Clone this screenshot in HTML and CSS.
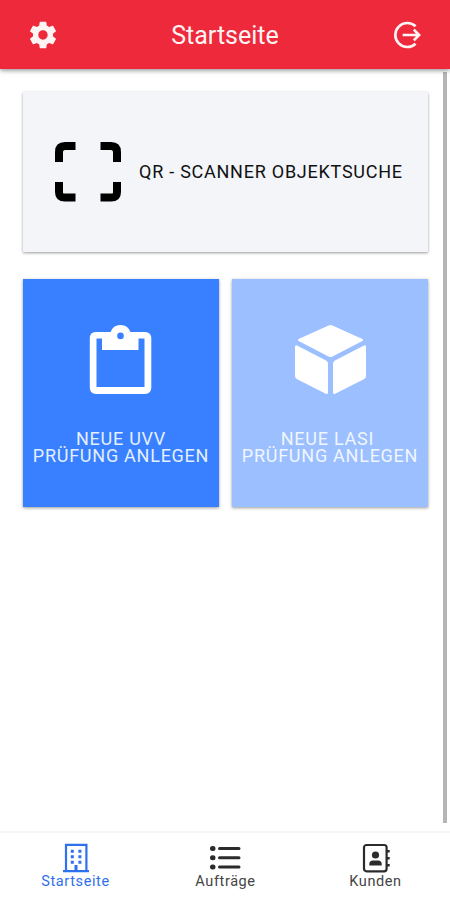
FILE: index.html
```
<!DOCTYPE html>
<html lang="de">
  <head>
    <title>Startseite</title>
    <meta charset="utf-8">
    <meta name="viewport" content="width=device-width, initial-scale=1">
    <link rel="stylesheet" href="styles.css">
  </head>
  <body>

  <header class="toolbar">
    <svg class="toolbar-icon" viewBox="0 0 24 24" fill="currentColor">
      <path d="M19.43 12.98c.04-.32.07-.64.07-.98s-.03-.66-.07-.98l2.11-1.65c.19-.15.24-.42.12-.64l-2-3.46c-.12-.22-.39-.3-.61-.22l-2.49 1c-.52-.4-1.08-.73-1.69-.98l-.38-2.65C14.46 2.18 14.25 2 14 2h-4c-.25 0-.46.18-.49.42l-.38 2.65c-.61.25-1.17.59-1.69.98l-2.49-1c-.23-.09-.49 0-.61.22l-2 3.46c-.13.22-.07.49.12.64l2.11 1.65c-.04.32-.07.65-.07.98s.03.66.07.98l-2.11 1.65c-.19.15-.24.42-.12.64l2 3.46c.12.22.39.3.61.22l2.49-1c.52.4 1.08.73 1.69.98l.38 2.65c.03.24.24.42.49.42h4c.25 0 .46-.18.49-.42l.38-2.65c.61-.25 1.17-.59 1.69-.98l2.49 1c.23.09.49 0 .61-.22l2-3.46c.12-.22.07-.49-.12-.64l-2.11-1.65zM12 15.5c-1.93 0-3.5-1.57-3.5-3.5s1.57-3.5 3.5-3.5 3.5 1.57 3.5 3.5-1.57 3.5-3.5 3.5z"/>
    </svg>
    <h1 class="toolbar-title">Startseite</h1>
    <svg class="toolbar-icon" viewBox="0 0 32 32" fill="none" stroke="currentColor" stroke-width="2.7">
      <path d="M24.6 7.3A12 12 0 1 0 24.6 24.7"/>
      <path d="M11.7 16H28M22.8 10.6L28.1 16L22.8 21.4"/>
    </svg>
  </header>

  <main class="content">
    <div class="page">
      <button class="card scanner">
        <svg class="scan-icon" viewBox="0 0 66 60" fill="none" stroke="#000" stroke-width="8">
          <path d="M4 20V10Q4 4 10 4H20.5"/>
          <path d="M45.5 4H56Q62 4 62 10V20"/>
          <path d="M62 40V50Q62 55.5 56 55.5H45.5"/>
          <path d="M20.5 55.5H10Q4 55.5 4 50V40"/>
        </svg>
        <span class="scanner-label">QR - SCANNER OBJEKTSUCHE</span>
      </button>

      <div class="tiles">
        <button class="card tile">
          <svg class="tile-icon" viewBox="0 0 71 70" fill="#fff">
            <path fill-rule="evenodd" d="M9.5 7H24.6A10.5 10.5 0 0 1 44.4 7H59Q65.3 7 65.3 13.5V62.5Q65.3 69 59 69H10Q3.8 69 3.8 62.5V13.5Q3.8 7 9.5 7ZM10.5 13.5V62H58.5V13.5H52.5V25H16V13.5ZM34.5 7.6A3.3 3.3 0 1 0 34.5 14.2A3.3 3.3 0 1 0 34.5 7.6Z"/>
          </svg>
          <span class="tile-label">NEUE UVV<br>PRÜFUNG ANLEGEN</span>
        </button>
        <button class="card tile disabled">
          <svg class="tile-icon" viewBox="0 0 71 70" fill="#fff">
            <path d="M33 .8Q35.5-.6 38 .8L67.4 14.1Q68.8 15 67.4 15.9L37.5 31.4Q35.5 32.5 33.5 31.4L3.6 15.9Q2.2 15 3.6 14.1Z"/>
            <path d="M0 21.8Q0 19.6 2 20.6L31 35.5Q33 36.5 33 38.5V67.3Q33 69.8 30.8 68.7L2.2 54.3Q0 53.2 0 51Z"/>
            <path d="M71 21.8Q71 19.6 69 20.6L40 35.5Q38 36.5 38 38.5V67.3Q38 69.8 40.2 68.7L68.8 54.3Q71 53.2 71 51Z"/>
          </svg>
          <span class="tile-label">NEUE LASI&nbsp;<br>PRÜFUNG ANLEGEN</span>
        </button>
      </div>
    </div>
    <div class="scrollbar"></div>
  </main>

  <nav class="tabs">
    <a class="tab active">
      <svg class="tab-icon" viewBox="0 0 32 30" fill="none" stroke="currentColor" stroke-width="2.2">
        <path d="M7 28V1.8H27.4V28M4 28.2H30"/>
        <path d="M17 22V28" stroke-width="3"/>
        <path d="M11.8 8.2H14.8M19.4 8.2H22.4M11.8 13.7H14.8M19.4 13.7H22.4M11.8 19.2H14.8M19.4 19.2H22.4" stroke-width="3"/>
      </svg>
      <span class="tab-label">Startseite</span>
    </a>
    <a class="tab">
      <svg class="tab-icon" viewBox="0 0 32 30" fill="none" stroke="currentColor">
        <path d="M3.5 5.5H4M3.5 14.8H4M3.5 24H4" stroke-width="5" stroke-linecap="round"/>
        <path d="M10.5 5.5H30M10.5 14.8H30M10.5 24H30" stroke-width="3" stroke-linecap="round"/>
      </svg>
      <span class="tab-label">Aufträge</span>
    </a>
    <a class="tab">
      <svg class="tab-icon" viewBox="0 0 32 30" fill="none" stroke="currentColor" stroke-width="2.2">
        <rect x="5" y="2" width="22.6" height="26.3" rx="2.5"/>
        <path d="M29.3 7V9.6M29.3 14V16.6M29.3 21V23.6" stroke-width="2.8"/>
        <circle cx="16.5" cy="12" r="3.6" fill="currentColor" stroke="none"/>
        <path d="M10.3 22.5V21Q10.3 17.5 14 17.5H19Q22.7 17.5 22.7 21V22.5Z" fill="currentColor" stroke="none"/>
      </svg>
      <span class="tab-label">Kunden</span>
    </a>
  </nav>

  </body>
</html>
```
FILE: styles.css
```
* {
  box-sizing: border-box;
}
body {
  margin: 0;
  height: 100vh;
  display: flex;
  flex-direction: column;
  overflow: hidden;
  background: #fff;
  font-family: Roboto, sans-serif;
}
button {
  font-family: inherit;
  border: 0;
}

.toolbar {
  height: 69px;
  flex: none;
  display: flex;
  align-items: center;
  justify-content: space-between;
  padding: 0 27px;
  background: #ee293b;
  color: #fff4f4;
  box-shadow: 0 1px 5px rgba(0,0,0,0.5);
  z-index: 1;
}
.toolbar-icon {
  width: 32px;
  height: 32px;
}
.toolbar-title {
  margin: 0;
  padding-top: 2px;
  font-size: 25px;
  font-weight: 400;
}

.content {
  flex: 1;
  display: flex;
  min-height: 0;
}
.page {
  flex: 1;
  padding: 23px 15px 0 23px;
}
.scrollbar {
  width: 4px;
  margin: 3px 3px 8px 0;
  background: #b5b5b5;
}

.card {
  box-shadow: 0 1px 3px rgba(0,0,0,0.4);
}
.scanner {
  width: 405px;
  height: 160px;
  display: flex;
  align-items: center;
  padding: 0 0 0 32px;
  gap: 18px;
  border-radius: 1px;
  background: #f3f5f9;
  color: #111;
}
.scan-icon {
  width: 66px;
  height: 60px;
}
.scanner-label {
  padding-bottom: 2px;
  font-size: 18px;
  letter-spacing: 0.75px;
  white-space: nowrap;
}

.tiles {
  display: flex;
  gap: 13px;
  margin-top: 27px;
}
.tile {
  width: 196px;
  height: 228px;
  display: flex;
  flex-direction: column;
  align-items: center;
  justify-content: flex-start;
  padding: 46px 0 0;
  gap: 35px;
  background: #3880ff;
  color: #e4efff;
}
.tile.disabled {
  background: #9cbfff;
  color: #f0f6ff;
}
.tile-icon {
  width: 71px;
  height: 70px;
}
.tile-label {
  font-size: 18px;
  line-height: 17px;
  letter-spacing: 0.75px;
  white-space: nowrap;
}

.tabs {
  height: 69px;
  flex: none;
  display: flex;
  border-top: 2px solid #f5f5f5;
}
.tab {
  flex: 1;
  display: flex;
  flex-direction: column;
  align-items: center;
  padding-top: 10px;
  color: #444;
}
.tab.active {
  color: #2f70ee;
}
.tab-icon {
  width: 32px;
  height: 30px;
}
.tab:not(.active) .tab-icon {
  color: #2b2b2b;
}
.tab-label {
  padding-top: 1px;
  padding-left: 1px;
  font-size: 14.5px;
  line-height: 16px;
  letter-spacing: 0.6px;
}
```
